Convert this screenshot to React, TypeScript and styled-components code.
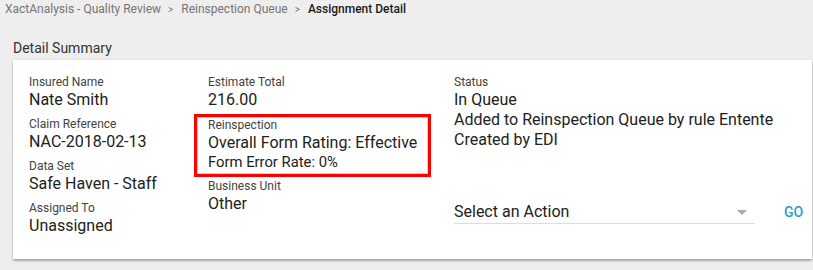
import React from "react";
import styled, { createGlobalStyle } from "styled-components";

const Global = createGlobalStyle`
  html, body { margin: 0; padding: 0; background: #eeeeee; }
  body { font-family: Roboto, "Liberation Sans", Arial, sans-serif; color: #212121; }
`;

const Page = styled.div`
  width: 813px;
  height: 270px;
  background: #eeeeee;
  overflow: hidden;
`;

const Breadcrumb = styled.nav`
  display: flex;
  align-items: center;
  height: 19px;
  padding-left: 5px;
  font-size: 12px;
  line-height: 19px;
`;

const Crumb = styled.span<{ $current?: boolean }>`
  color: ${(p) => (p.$current ? "#1a1a1a" : "#757575")};
  font-weight: ${(p) => (p.$current ? 500 : 400)};
`;

const Sep = styled.span`
  color: #757575;
  font-size: 10px;
  margin: 0 8px 0 7px;
`;

const SectionTitle = styled.h2`
  margin: 0;
  padding: 20px 0 0 13px;
  font-size: 14px;
  font-weight: 400;
  line-height: 18px;
  color: #333333;
  height: 21px;
`;

const Card = styled.section`
  margin-left: 13px;
  width: 799px;
  height: 199px;
  background: #ffffff;
  box-shadow: 0 2px 2px rgba(0, 0, 0, 0.28), 0 0 2px rgba(0, 0, 0, 0.1);
  display: flex;
  padding: 14px 0 0 16px;
  box-sizing: border-box;
`;

const Column = styled.div<{ $width: number }>`
  width: ${(p) => p.$width}px;
  display: flex;
  flex-direction: column;
`;

const Field = styled.div`
  margin-bottom: 6px;
`;

const Label = styled.div`
  font-size: 12px;
  line-height: 16px;
  color: #424242;
`;

const Value = styled.div<{ $small?: boolean }>`
  font-size: ${(p) => (p.$small ? 14.8 : 16)}px;
  line-height: ${(p) => (p.$small ? 18 : 20)}px;
  color: #212121;
`;

const Highlight = styled.div`
  margin: 4px 0 1px -14px;
  width: 237px;
  box-sizing: border-box;
  border: 3px solid #ff0000;
  box-shadow: inset 0 0 0 1px #f4c4c4;
  padding: 0 0 3px 11px;
`;

const ActionRow = styled.div`
  display: flex;
  align-items: center;
  margin-top: 50px;
`;

const Select = styled.div`
  width: 301px;
  height: 24px;
  box-sizing: border-box;
  border-bottom: 1px solid #dddddd;
  display: flex;
  align-items: center;
  justify-content: space-between;
  font-size: 16px;
  line-height: 22px;
  color: #212121;
  padding-right: 8px;
`;

const Caret = styled.span`
  width: 0;
  height: 0;
  border-left: 5px solid transparent;
  border-right: 5px solid transparent;
  border-top: 5px solid #aaaaaa;
  margin-top: 2px;
`;

const GoButton = styled.button`
  margin-left: 29px;
  border: none;
  background: none;
  padding: 0;
  font-family: inherit;
  font-size: 14px;
  font-weight: 500;
  color: #2d9bd2;
  cursor: pointer;
`;

export default function App() {
  return (
    <Page>
      <Global />
      <Breadcrumb>
        <Crumb>XactAnalysis - Quality Review</Crumb>
        <Sep>&gt;</Sep>
        <Crumb>Reinspection Queue</Crumb>
        <Sep>&gt;</Sep>
        <Crumb $current>Assignment Detail</Crumb>
      </Breadcrumb>
      <SectionTitle>Detail Summary</SectionTitle>
      <Card>
        <Column $width={179}>
          <Field>
            <Label>Insured Name</Label>
            <Value>Nate Smith</Value>
          </Field>
          <Field>
            <Label>Claim Reference</Label>
            <Value>NAC-2018-02-13</Value>
          </Field>
          <Field>
            <Label>Data Set</Label>
            <Value>Safe Haven - Staff</Value>
          </Field>
          <Field>
            <Label>Assigned To</Label>
            <Value>Unassigned</Value>
          </Field>
        </Column>
        <Column $width={246}>
          <div>
            <Label>Estimate Total</Label>
            <Value>216.00</Value>
          </div>
          <Highlight>
            <Label>Reinspection</Label>
            <Value>Overall Form Rating: Effective</Value>
            <Value $small>Form Error Rate: 0%</Value>
          </Highlight>
          <div>
            <Label>Business Unit</Label>
            <Value>Other</Value>
          </div>
        </Column>
        <Column $width={350}>
          <Label>Status</Label>
          <Value>In Queue</Value>
          <Value>Added to Reinspection Queue by rule Entente</Value>
          <Value>Created by EDI</Value>
          <ActionRow>
            <Select>
              <span>Select an Action</span>
              <Caret />
            </Select>
            <GoButton>GO</GoButton>
          </ActionRow>
        </Column>
      </Card>
    </Page>
  );
}
